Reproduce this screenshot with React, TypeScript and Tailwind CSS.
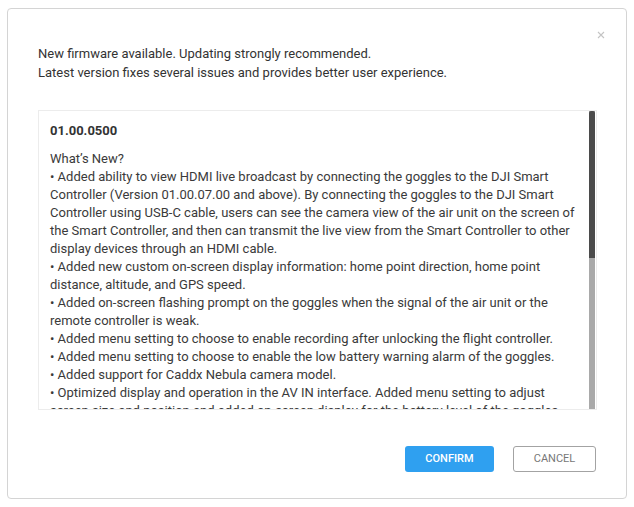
import React from 'react';

const notes = [
    "• Added ability to view HDMI live broadcast by connecting the goggles to the DJI Smart Controller (Version 01.00.07.00 and above). By connecting the goggles to the DJI Smart Controller using USB-C cable, users can see the camera view of the air unit on the screen of the Smart Controller, and then can transmit the live view from the Smart Controller to other display devices through an HDMI cable.",
    "• Added new custom on-screen display information: home point direction, home point distance, altitude, and GPS speed.",
    "• Added on-screen flashing prompt on the goggles when the signal of the air unit or the remote controller is weak.",
    "• Added menu setting to choose to enable recording after unlocking the flight controller.",
    "• Added menu setting to choose to enable the low battery warning alarm of the goggles.",
    "• Added support for Caddx Nebula camera model.",
    "• Optimized display and operation in the AV IN interface. Added menu setting to adjust screen size and position and added on-screen display for the battery level of the goggles.",
    "• Optimized the image transmission stability when the goggles are used with multiple air units at the same time.",
    "• Fixed other known issues.",
];

const App = () => {
    return (
        <div className="w-[634px] h-[507px] bg-white pt-[8px] pl-[7px]" style={{ fontFamily: 'Roboto, "Liberation Sans", sans-serif' }}>
            <div className="relative w-[620px] h-[491px] border border-[#d4d4d4] rounded-[4px] bg-white flex flex-col pl-[30px] pr-[29px] pt-[35px]">
                {/* close */}
                <button className="absolute top-[21px] right-[20px] w-[10px] h-[10px] flex items-center justify-center text-[#c4c4c4]">
                    <svg width="8" height="8" viewBox="0 0 8 8">
                        <path d="M1 1 L7 7 M7 1 L1 7" stroke="currentColor" strokeWidth="1.1" />
                    </svg>
                </button>

                <div className="text-[13px] leading-[19px] text-[#333]">
                    <p>New firmware available. Updating strongly recommended.</p>
                    <p>Latest version fixes several issues and provides better user experience.</p>
                </div>

                {/* release notes */}
                <div className="mt-[28px] h-[300px] border border-[#ececec] flex overflow-hidden">
                    <div className="flex-1 pl-[11px] pt-[11px] text-[13px] leading-[18px] text-[#3a3a3a]">
                        <h3 className="font-bold text-[#333] mb-[10px]">01.00.0500</h3>
                        <p>What’s New?</p>
                        {notes.map((n, i) => (
                            <p key={i}>{n}</p>
                        ))}
                    </div>
                    {/* scrollbar */}
                    <div className="w-[6px] mr-[1px] ml-[3px] flex flex-col bg-[#a9a9a9] shrink-0">
                        <div className="h-[147px] bg-[#4b4b4b] rounded-t-[2px]" />
                    </div>
                </div>

                <div className="flex justify-end gap-[19px] mt-[36px] mr-[1px]">
                    <button className="w-[89px] h-[26px] rounded-[3px] bg-[#2fa0f0] text-white text-[11px] font-medium uppercase">
                        Confirm
                    </button>
                    <button className="w-[83px] h-[26px] rounded-[3px] border border-[#a3a3a3] text-[#777] text-[11px] uppercase">
                        Cancel
                    </button>
                </div>
            </div>
        </div>
    );
};

export default App;
